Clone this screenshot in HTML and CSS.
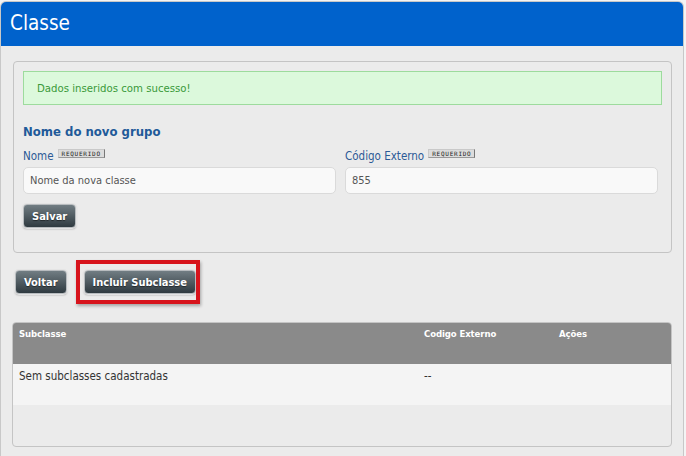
FILE: index.html
```html
<!DOCTYPE html>
<html lang="pt-BR">
<head>
<meta charset="utf-8">
<title>Classe</title>
<link rel="stylesheet" href="styles.css">
</head>
<body>
<div class="panel">
  <div class="panel-head"><h1 class="title">Classe</h1></div>
  <div class="panel-body">
    <div class="fieldset">
      <div class="alert">Dados inseridos com sucesso!</div>
      <h2 class="group-title">Nome do novo grupo</h2>
      <div class="grid">
        <div class="field">
          <label class="label">Nome <span class="req">REQUERIDO</span></label>
          <input class="input" type="text" placeholder="Nome da nova classe">
        </div>
        <div class="field">
          <label class="label">Código Externo <span class="req">REQUERIDO</span></label>
          <input class="input" type="text" value="855">
        </div>
      </div>
      <button class="btn btn-save">Salvar</button>
    </div>
    <div class="actions">
      <button class="btn">Voltar</button>
      <span class="highlight-wrap"><button class="btn">Incluir Subclasse</button><span class="highlight"></span></span>
    </div>
    <div class="table-box">
      <table class="table">
        <thead>
          <tr><th class="c1">Subclasse</th><th class="c2">Codigo Externo</th><th class="c3">Ações</th></tr>
        </thead>
        <tbody>
          <tr><td class="c1">Sem subclasses cadastradas</td><td class="c2">--</td><td class="c3"></td></tr>
        </tbody>
      </table>
    </div>
  </div>
</div>
</body>
</html>
```
FILE: styles.css
```css
html, body {
  margin: 0;
  padding: 0;
  background: #f4f4f4;
  font-family: "DejaVu Sans Condensed", "DejaVu Sans", sans-serif;
  font-stretch: condensed;
  font-size: 11px;
  color: #333;
}

.panel {
  margin-top: 1px;
  width: 682px;
  height: 460px;
  border: 1px solid #c8c8c8;
  border-bottom: none;
  border-radius: 6px 6px 0 0;
  background: #ebebeb;
}

.panel-head {
  height: 44px;
  background: #0062cc;
  border-radius: 5px 5px 0 0;
  display: flex;
  align-items: center;
  padding-left: 9px;
}

.title {
  margin: 0;
  color: #fff;
  font-size: 20.5px;
  font-weight: normal;
  line-height: 1;
  padding-bottom: 2px;
}

.panel-body {
  padding: 15px 11px 0 12px;
}

.fieldset {
  border: 1px solid #c4c4c4;
  border-radius: 4px;
  padding: 9px 9px 24px 9px;
  background: #ebebeb;
}

.alert {
  height: 32px;
  border: 1px solid #9ddb9d;
  background: #dcf9dc;
  color: #3a9a3a;
  font-size: 11.3px;
  display: flex;
  align-items: center;
  padding-left: 13px;
}

.group-title {
  margin: 17px 0 0 0;
  line-height: 20px;
  font-size: 13px;
  font-weight: bold;
  color: #1f5a99;
}

.grid {
  display: grid;
  grid-template-columns: 313px 313px;
  column-gap: 9px;
  margin-top: 6px;
}

.field {
  display: flex;
  flex-direction: column;
}

.label {
  line-height: 16px;
  height: 16px;
  font-size: 11.5px;
  color: #2b5a96;
  display: flex;
  align-items: center;
  gap: 4px;
}

.req {
  display: inline-block;
  font-family: "DejaVu Sans Mono", monospace;
  font-stretch: normal;
  font-size: 6px;
  line-height: 7px;
  height: 7px;
  padding: 0 3px;
  background: #dcdcdc;
  color: #222;
  border: 1px solid #c9c9c9;
  border-right-color: #777;
  border-bottom-color: #999;
  letter-spacing: 0.75px;
  margin-top: -5px;
}

.input {
  margin-top: 3px;
  height: 27px;
  box-sizing: border-box;
  border: 1px solid #dadada;
  border-radius: 5px;
  background: #f9f9f9;
  padding: 0 6px;
  font-family: "DejaVu Sans Condensed", "DejaVu Sans", sans-serif;
  font-stretch: condensed;
  font-size: 11px;
  color: #555;
  outline: none;
}

.input::placeholder {
  color: #555;
}

.btn {
  height: 24px;
  box-sizing: border-box;
  padding: 0 8px;
  border: 1px solid #b8bcbf;
  border-radius: 4px;
  background: linear-gradient(#717d83, #2f3a40);
  box-shadow: 0 0 0 1px #e4e4e4, 0 1px 2px rgba(0, 0, 0, 0.35);
  color: #fff;
  font-family: "DejaVu Sans Condensed", "DejaVu Sans", sans-serif;
  font-stretch: condensed;
  font-size: 11px;
  font-weight: bold;
  text-shadow: 0 1px 1px rgba(0, 0, 0, 0.5);
  cursor: pointer;
}

.btn-save {
  margin-top: 10px;
  display: block;
}

.actions {
  margin-top: 17px;
  margin-left: 2px;
  display: flex;
  gap: 17px;
}

.highlight-wrap {
  position: relative;
  display: inline-block;
}

.highlight {
  position: absolute;
  left: -8px;
  top: -10px;
  right: -4px;
  bottom: -10px;
  border: 4px solid #d7141c;
  box-shadow: 1px 2px 3px rgba(0, 0, 0, 0.3);
  pointer-events: none;
}

.table-box {
  margin-top: 28px;
  margin-left: -1px;
  width: 658px;
  height: 123px;
  border: 1px solid #c4c4c4;
  border-radius: 4px;
  background: #ebebeb;
  overflow: hidden;
}

.table {
  width: 100%;
  border-collapse: collapse;
}

.table th {
  height: 41px;
  box-sizing: border-box;
  background: #8a8a8a;
  color: #fff;
  font-weight: bold;
  font-size: 9.5px;
  letter-spacing: -0.1px;
  text-align: left;
  vertical-align: top;
  padding: 5px 0 0 6px;
}

.table td {
  height: 41px;
  box-sizing: border-box;
  background: #f4f4f4;
  color: #333;
  font-size: 11.5px;
  text-align: left;
  vertical-align: top;
  padding: 5px 0 0 6px;
}

.c1 { width: 405px; }
.c2 { width: 135px; }
```
